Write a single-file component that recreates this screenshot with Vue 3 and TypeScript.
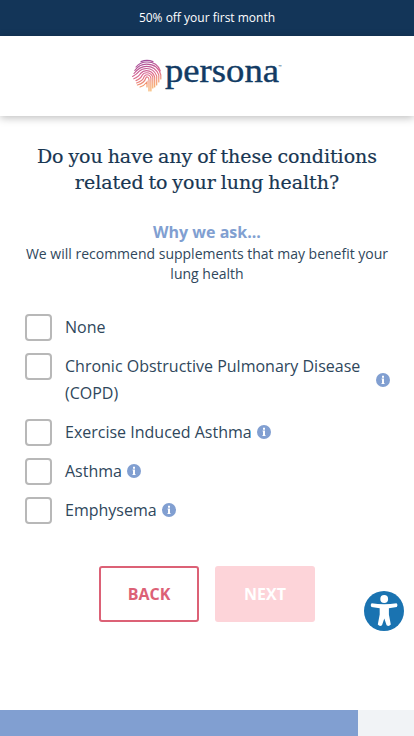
<script setup lang="ts">
import { ref } from 'vue'

interface Condition {
  label: string
  info: boolean
}

const conditions: Condition[] = [
  { label: 'None', info: false },
  { label: 'Chronic Obstructive Pulmonary Disease (COPD)', info: true },
  { label: 'Exercise Induced Asthma', info: true },
  { label: 'Asthma', info: true },
  { label: 'Emphysema', info: true },
]

const selected = ref<string[]>([])
const progress = 86.5
</script>

<template>
  <div class="page">
    <div class="promo">50% off your first month</div>
    <header class="header">
      <svg class="logo" width="152" height="36" viewBox="0 0 152 36" role="img" aria-label="persona">
        <defs>
          <linearGradient id="print" gradientUnits="userSpaceOnUse" x1="10" y1="1" x2="19" y2="33">
            <stop offset="0" stop-color="#9a4a9c" />
            <stop offset="0.45" stop-color="#dc6791" />
            <stop offset="0.72" stop-color="#f2946f" />
            <stop offset="1" stop-color="#f7b058" />
          </linearGradient>
        </defs>
        <g fill="none" stroke="url(#print)" stroke-width="1.15" stroke-linecap="round">
          <path d="M9 2.6Q15 .2 21 2.6" />
          <path d="M4 8Q8 3 15 3Q25.5 3 28.3 12" />
          <path d="M2.8 11.5Q7 5.1 14.5 5.1Q26 5.1 28.8 16V20" />
          <path d="M2 14.5Q7.5 7.3 14.5 7.3Q23.5 7.3 26.8 16V23" />
          <path d="M.6 17.5Q5 15 7 12.3Q10 9.5 14.5 9.5Q22 9.5 24.7 17V26" />
          <path d="M1.8 19.8Q7.5 17 8.5 14.5Q11 11.6 14.5 11.6Q20.5 11.6 22.7 18V28" />
          <path d="M4 21.6Q9 19.5 10 16.5Q11.5 13.7 14.8 13.7Q19 13.7 20.8 18V29" />
          <path d="M4.6 24Q11 21.5 12 17.8Q13 15.7 15 15.7Q18 15.7 18.9 19V32" />
          <path d="M5.4 26Q12.5 24 13.8 19Q14.5 17.6 15.5 18Q17 18.5 17 21V32" />
          <path d="M8 28Q12 27 15 23V28" />
        </g>
        <text class="wordmark" x="33" y="23" textLength="114" lengthAdjust="spacingAndGlyphs">persona</text>
        <text class="tm" x="146.5" y="9">™</text>
      </svg>
    </header>

    <main class="main">
      <h1 class="title">Do you have any of these conditions<br />related to your lung health?</h1>
      <h2 class="why">Why we ask...</h2>
      <p class="reason">We will recommend supplements that may benefit your lung health</p>

      <div class="options">
        <div v-for="c in conditions" :key="c.label" class="option">
          <label class="choice">
            <input v-model="selected" class="box" type="checkbox" :value="c.label" />
            <span class="label">{{ c.label }}</span>
          </label>
          <svg v-if="c.info" class="info" width="14" height="14" viewBox="0 0 14 14">
            <circle cx="7" cy="7" r="7" fill="#819fd1" />
            <path d="M6 2.8h2v1.9H6zM5.6 5.6H8v4.5h.5v1H5.5v-1H6V6.6h-.4z" fill="#fff" />
          </svg>
        </div>
      </div>

      <div class="actions">
        <button class="btn back" type="button">BACK</button>
        <button class="btn next" type="button">NEXT</button>
      </div>
    </main>

    <svg class="access" width="40" height="40" viewBox="0 0 40 40">
      <circle cx="20" cy="20" r="20" fill="#1a73b1" />
      <circle cx="20.2" cy="8" r="3.9" fill="#fff" />
      <path d="M7.6 12.3Q20 14 32.6 12.3Q34.4 14 32.8 16L24.9 17.3V23.5L26.8 33.5Q24.8 36 22.6 34.2L20.3 27.5L18 34.2Q15.8 36 13.8 33.5L15.7 23.5V17.3L7.4 16Q5.8 14 7.6 12.3Z" fill="#fff" />
    </svg>

    <div class="progress"><div class="bar" :style="{ width: progress + '%' }"></div></div>
  </div>
</template>

<style>
body {
  margin: 0;
  background: #fff;
}
</style>

<style scoped>
.page {
  display: flex;
  flex-direction: column;
  height: 736px;
  overflow: hidden;
  font-family: 'Open Sans', sans-serif;
  color: #2f475c;
}
.promo {
  height: 36px;
  line-height: 36px;
  text-align: center;
  font-size: 12px;
  font-weight: 500;
  color: #fff;
  background: #133558;
}
.header {
  display: flex;
  justify-content: center;
  height: 80px;
  box-sizing: border-box;
  padding: 23px 0 0 2px;
  box-shadow: 0 2px 8px rgba(0, 0, 0, 0.25);
}
.logo {
  overflow: visible;
}
.wordmark {
  font-family: 'Liberation Serif', serif;
  font-size: 34px;
  fill: #123b64;
  stroke: #123b64;
  stroke-width: 0.4px;
}
.tm {
  font-size: 4px;
  fill: #123b64;
}
.main {
  flex: 1;
}
.title {
  margin: 27px 0 0;
  text-align: center;
  font-family: 'DejaVu Serif', serif;
  font-size: 19px;
  font-weight: 400;
  line-height: 26px;
  word-spacing: -1.2px;
  -webkit-text-stroke: 0.2px #183652;
  color: #183652;
}
.why {
  margin: 26px 0 0;
  text-align: center;
  font-size: 16px;
  line-height: 22px;
  font-weight: 700;
  color: #819fd1;
}
.reason {
  margin: 1px 20px 0;
  text-align: center;
  font-size: 14px;
  line-height: 20px;
}
.options {
  display: flex;
  flex-direction: column;
  gap: 12px;
  margin: 30px 24px 0 25px;
}
.option {
  display: flex;
  align-items: center;
}
.choice {
  display: flex;
  align-items: flex-start;
}
.box {
  appearance: none;
  flex: none;
  width: 27px;
  height: 27px;
  margin: 0 13px 0 0;
  box-sizing: border-box;
  border: 2px solid #b8b8b8;
  border-radius: 4px;
  background: #fff;
}
.label {
  font-size: 16px;
  line-height: 27px;
}
.info {
  flex: none;
  margin: 0 0 1px 5px;
}
.actions {
  display: flex;
  justify-content: center;
  gap: 16px;
  margin-top: 42px;
}
.btn {
  width: 100px;
  height: 56px;
  padding: 0;
  border: 0;
  border-radius: 3px;
  font: 700 16px 'Open Sans', sans-serif;
}
.back {
  border: 2px solid #dc6176;
  color: #dc6176;
  background: #fff;
}
.next {
  color: #fff;
  background: #fdd4d9;
}
.access {
  position: absolute;
  left: 364px;
  top: 591px;
}
.progress {
  height: 26px;
  background: #f1f3f6;
}
.bar {
  height: 100%;
  background: #819fd1;
}
</style>
